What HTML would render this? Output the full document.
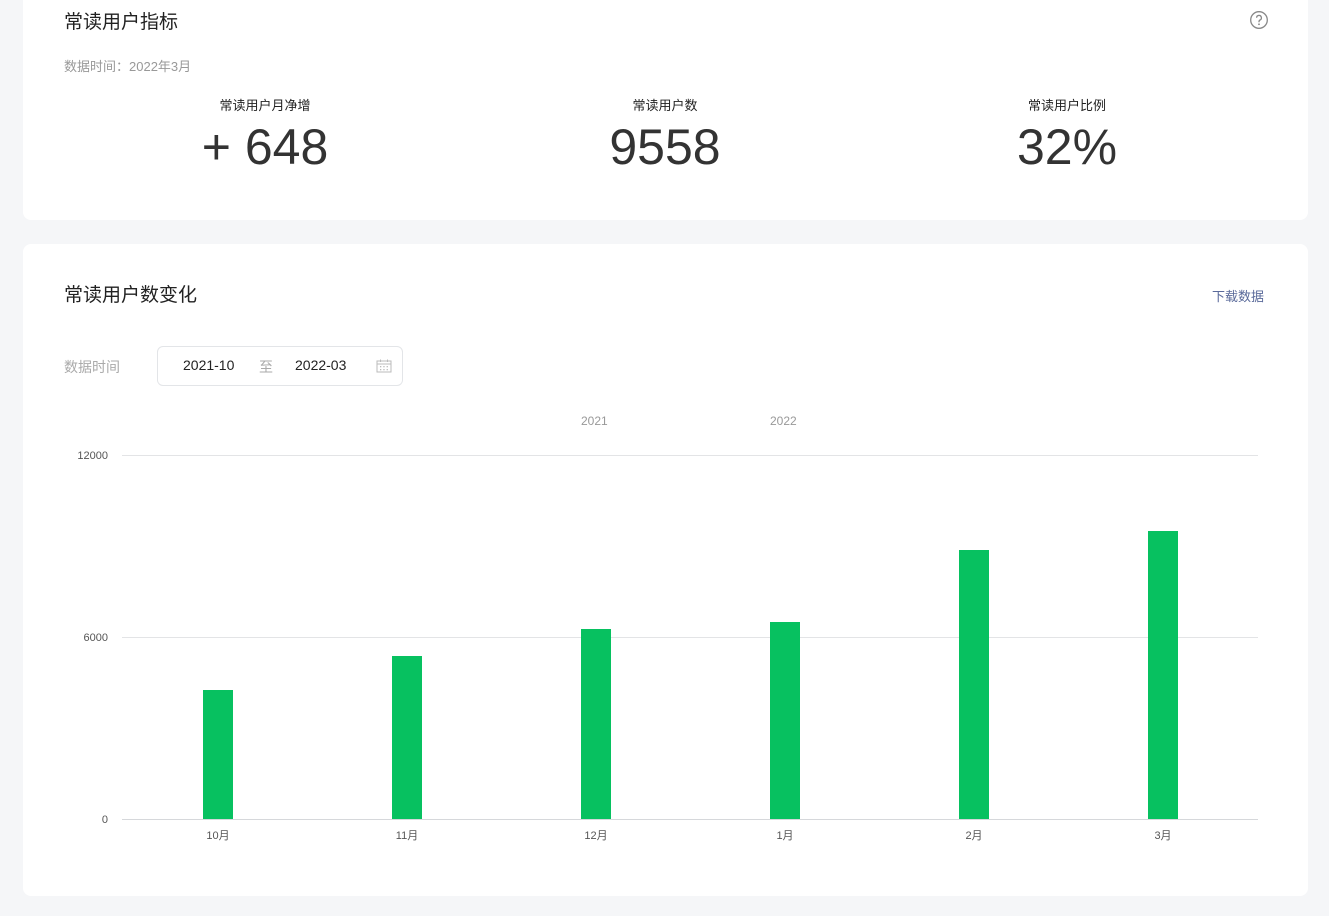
<!DOCTYPE html>
<html><head><meta charset="utf-8"><style>
*{margin:0;padding:0;box-sizing:border-box}
body{width:1329px;height:916px;background:#f5f6f8;font-family:"Liberation Sans","Noto Sans CJK SC",sans-serif;position:relative;overflow:hidden;color:#333}
.card{position:absolute;left:23px;width:1285px;background:#fff;border-radius:8px}
.a{position:absolute;white-space:nowrap}
.g{position:absolute;left:122px;width:1136px;height:1px;background:#e3e4e6}
.bar{position:absolute;width:30px;background:#07c160;bottom:97px}
.yl{position:absolute;right:1221px;font-size:11px;color:#555;transform:translateY(-50%)}
.xl{position:absolute;top:827px;font-size:11px;color:#555;width:60px;text-align:center}
.lbl{font-size:13px;color:#222;text-align:center;width:200px}
.big{font-size:50px;color:#333;text-align:center;width:300px;top:118px}
</style></head><body>
<div class="card" style="top:-10px;height:230px"></div>
<div class="card" style="top:244px;height:652px"></div>

<div class="a" style="left:64px;top:7px;font-size:19px;color:#222">常读用户指标</div>
<svg class="a" style="left:1249px;top:10px" width="20" height="20" viewBox="0 0 20 20"><circle cx="10" cy="10" r="8.3" fill="none" stroke="#888" stroke-width="1.3"/><path d="M7.6 7.8a2.4 2.4 0 1 1 3.4 2.2c-.7.4-1 .8-1 1.6v.6" fill="none" stroke="#888" stroke-width="1.3"/><circle cx="10" cy="14.3" r=".9" fill="#888"/></svg>
<div class="a" style="left:64px;top:56px;font-size:13px;color:#999">数据时间：2022年3月</div>

<div class="a lbl" style="left:165px;top:95px">常读用户月净增</div>
<div class="a lbl" style="left:565px;top:95px">常读用户数</div>
<div class="a lbl" style="left:967px;top:95px">常读用户比例</div>
<div class="a big" style="left:115px">+ 648</div>
<div class="a big" style="left:515px">9558</div>
<div class="a big" style="left:917px">32%</div>

<div class="a" style="left:64px;top:280px;font-size:19px;color:#222">常读用户数变化</div>
<div class="a" style="left:1212px;top:286px;font-size:13px;color:#5a6a9a">下载数据</div>

<div class="a" style="left:64px;top:357px;font-size:14px;color:#aaa">数据时间</div>
<div class="a" style="left:157px;top:346px;width:246px;height:40px;border:1px solid #e3e5e8;border-radius:6px"></div>
<div class="a" style="left:183px;top:357px;font-size:14px;color:#222">2021-10</div>
<div class="a" style="left:259px;top:357px;font-size:14px;color:#aaa">至</div>
<div class="a" style="left:295px;top:357px;font-size:14px;color:#222">2022-03</div>
<svg class="a" style="left:376px;top:359px" width="16" height="14" viewBox="0 0 16 14"><rect x="1" y="2" width="14" height="11" fill="none" stroke="#bbb"/><line x1="1" y1="5" x2="15" y2="5" stroke="#bbb"/><line x1="4.5" y1="0.5" x2="4.5" y2="3" stroke="#bbb"/><line x1="11.5" y1="0.5" x2="11.5" y2="3" stroke="#bbb"/><g fill="#bbb"><rect x="4" y="7" width="1.3" height="1.3"/><rect x="7.3" y="7" width="1.3" height="1.3"/><rect x="10.6" y="7" width="1.3" height="1.3"/><rect x="4" y="10" width="1.3" height="1.3"/><rect x="7.3" y="10" width="1.3" height="1.3"/><rect x="10.6" y="10" width="1.3" height="1.3"/></g></svg>

<div class="a" style="left:581px;top:414px;font-size:12px;color:#999">2021</div>
<div class="a" style="left:770px;top:414px;font-size:12px;color:#999">2022</div>

<div class="g" style="top:455px"></div>
<div class="g" style="top:637px"></div>
<div class="g" style="top:819px;background:#d6d8db"></div>
<div class="yl" style="top:456px">12000</div>
<div class="yl" style="top:638px">6000</div>
<div class="yl" style="top:820px">0</div>

<div class="bar" style="left:203px;top:690px"></div>
<div class="bar" style="left:392px;top:656px"></div>
<div class="bar" style="left:581px;top:629px"></div>
<div class="bar" style="left:770px;top:622px"></div>
<div class="bar" style="left:959px;top:550px"></div>
<div class="bar" style="left:1148px;top:531px"></div>

<div class="xl" style="left:188px">10月</div>
<div class="xl" style="left:377px">11月</div>
<div class="xl" style="left:566px">12月</div>
<div class="xl" style="left:755px">1月</div>
<div class="xl" style="left:944px">2月</div>
<div class="xl" style="left:1133px">3月</div>
</body></html>
